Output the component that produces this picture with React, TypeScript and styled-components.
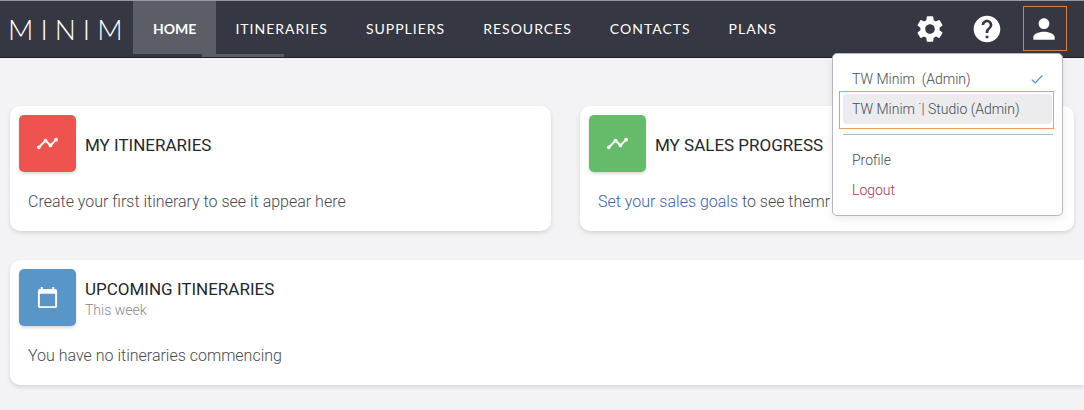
import React from 'react';
import styled, { createGlobalStyle } from 'styled-components';
import {
  MdSettings,
  MdHelp,
  MdPerson,
  MdTimeline,
  MdCalendarToday,
} from 'react-icons/md';

const GlobalStyle = createGlobalStyle`
  *, *::before, *::after { box-sizing: border-box; }
  body {
    margin: 0;
    background: #f3f3f5;
    color: #464a50;
    font-family: Roboto, "Liberation Sans", sans-serif;
    font-size: 16px;
    font-weight: 300;
    line-height: 20px;
  }
  button, a { font: inherit; color: inherit; }
  h2, p { margin: 0; }
`;

const Header = styled.header`
  position: relative;
  display: flex;
  height: 58px;
  border-top: 1px solid #939aa5;
  border-bottom: 1px solid #211e2b;
  background: #353742;
`;

const Logo = styled.a`
  width: 133px;
  padding-left: 8px;
  color: #fff;
  font-family: Lato, sans-serif;
  font-size: 28px;
  font-weight: 300;
  letter-spacing: 7px;
  line-height: 57px;
  text-decoration: none;
  white-space: nowrap;
`;

const Nav = styled.nav`
  display: flex;
  flex-direction: column;
`;

const NavList = styled.div`
  display: flex;
  height: 53px;
`;

const NavLink = styled.a<{ $active?: boolean }>`
  padding: 0 ${(p) => (p.$active ? 20 : 19)}px;
  background: ${(p) => (p.$active ? '#5b5e66' : 'transparent')};
  color: #fff;
  font-family: Lato, sans-serif;
  font-size: 14px;
  font-weight: ${(p) => (p.$active ? 700 : 400)};
  letter-spacing: ${(p) => (p.$active ? 0 : 1)}px;
  line-height: 56px;
  text-decoration: none;
`;

const NavIndicator = styled.div`
  width: 82px;
  height: 3px;
  margin-left: 69px;
  background: #5b5e66;
`;

const Actions = styled.div`
  display: flex;
  gap: 13px;
  margin-left: auto;
  padding: 5px 17px 0 0;
`;

const ActionButton = styled.button<{ $selected?: boolean }>`
  display: flex;
  align-items: center;
  justify-content: center;
  width: 44px;
  height: 45px;
  padding: 0 2px 0 0;
  border: 1px solid ${(p) => (p.$selected ? '#d98046' : 'transparent')};
  background: none;
  color: #fff;
  cursor: pointer;
`;

const Menu = styled.div`
  position: absolute;
  z-index: 1;
  top: 52px;
  right: 21px;
  width: 231px;
  padding: 10px 8px 10px 6px;
  border: 1px solid #b4b8bf;
  border-radius: 5px;
  background: #fff;
  box-shadow: 0 3px 8px rgba(0, 0, 0, 0.08);
`;

const MenuItem = styled.button<{ $danger?: boolean; $hover?: boolean }>`
  display: flex;
  align-items: center;
  justify-content: space-between;
  width: 100%;
  height: 30px;
  padding: 0 9px 0 ${(p) => (p.$hover ? 9 : 13)}px;
  border: 0;
  border-radius: 4px;
  background: ${(p) => (p.$hover ? '#ececee' : 'none')};
  color: ${(p) => (p.$danger ? '#a8324a' : '#464a50')};
  font-size: 14px;
  text-align: left;
  white-space: pre;
  cursor: pointer;
`;

const Highlight = styled.div`
  margin-top: -3px;
  padding: 2px 1px 4px 3px;
  border: 1px solid #f09a62;
`;

const Divider = styled.hr`
  margin: 5px 1px 10px 4px;
  border: 0;
  border-top: 1px solid #b4b8bf;
`;

const Main = styled.main`
  display: grid;
  gap: 29px;
  padding: 48px 0 25px 10px;
`;

const CardRow = styled.div`
  display: grid;
  grid-template-columns: 541fr 494fr;
  gap: 29px;
  padding-right: 10px;
`;

const Card = styled.section<{ $bleed?: boolean }>`
  padding: 9px;
  border-radius: ${(p) => (p.$bleed ? '10px 0 0 10px' : '10px')};
  background: #fff;
  box-shadow: 0 2px 4px rgba(0, 0, 0, 0.12);
`;

const CardHeader = styled.div`
  display: flex;
  align-items: center;
  gap: 9px;
`;

const IconTile = styled.div<{ $color: string }>`
  display: flex;
  align-items: center;
  justify-content: center;
  width: 57px;
  height: 57px;
  border-radius: 5px;
  background: ${(p) => p.$color};
  box-shadow: 0 2px 3px rgba(0, 0, 0, 0.14);
  color: #fff;
`;

const CardHeading = styled.div`
  padding-top: 2px;
`;

const CardTitle = styled.h2`
  color: #24272e;
  font-size: 17px;
  font-weight: 400;
  line-height: 22px;
`;

const CardSubtitle = styled.p`
  color: #85888d;
  font-size: 14px;
`;

const CardBody = styled.p`
  padding: 20px 9px 10px;
`;

const BodyLink = styled.a`
  && { color: #3a62b5; }
  text-decoration: none;
`;

const CheckIcon = () => (
  <svg width="16" height="16" viewBox="0 0 16 16" fill="none" stroke="#4a8fc0" strokeWidth="1.2">
    <path d="M2.8 8.6 6.2 12 13.4 4.4" />
  </svg>
);

const links = ['HOME', 'ITINERARIES', 'SUPPLIERS', 'RESOURCES', 'CONTACTS', 'PLANS'];

export default function App() {
  return (
    <>
      <GlobalStyle />
      <Header>
        <Logo href="#">MINIM</Logo>
        <Nav>
          <NavList>
            {links.map((label, i) => (
              <NavLink key={label} href="#" $active={i === 0}>
                {label}
              </NavLink>
            ))}
          </NavList>
          <NavIndicator />
        </Nav>
        <Actions>
          <ActionButton aria-label="Settings"><MdSettings size={32} /></ActionButton>
          <ActionButton aria-label="Help"><MdHelp size={32} /></ActionButton>
          <ActionButton aria-label="Account" $selected><MdPerson size={32} /></ActionButton>
        </Actions>
        <Menu>
          <MenuItem>{'TW Minim  (Admin)'}<CheckIcon /></MenuItem>
          <Highlight>
            <MenuItem $hover>TW Minim ˙| Studio (Admin)</MenuItem>
          </Highlight>
          <Divider />
          <MenuItem>Profile</MenuItem>
          <MenuItem $danger>Logout</MenuItem>
        </Menu>
      </Header>
      <Main>
        <CardRow>
          <Card>
            <CardHeader>
              <IconTile $color="#ef5350"><MdTimeline size={23} /></IconTile>
              <CardHeading><CardTitle>MY ITINERARIES</CardTitle></CardHeading>
            </CardHeader>
            <CardBody>Create your first itinerary to see it appear here</CardBody>
          </Card>
          <Card>
            <CardHeader>
              <IconTile $color="#66bb6a"><MdTimeline size={23} /></IconTile>
              <CardHeading><CardTitle>MY SALES PROGRESS</CardTitle></CardHeading>
            </CardHeader>
            <CardBody><BodyLink href="#">Set your sales goals</BodyLink> to see themr</CardBody>
          </Card>
        </CardRow>
        <Card $bleed>
          <CardHeader>
            <IconTile $color="#5995c6"><MdCalendarToday size={23} /></IconTile>
            <CardHeading>
              <CardTitle>UPCOMING ITINERARIES</CardTitle>
              <CardSubtitle>This week</CardSubtitle>
            </CardHeading>
          </CardHeader>
          <CardBody>You have no itineraries commencing</CardBody>
        </Card>
      </Main>
    </>
  );
}
